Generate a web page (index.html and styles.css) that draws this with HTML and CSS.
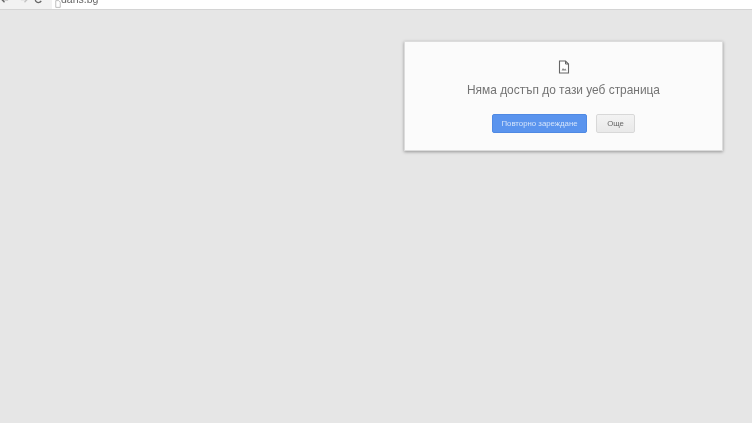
FILE: index.html
```html
<!DOCTYPE html>
<html lang="bg">
<head>
<meta charset="utf-8">
<title>dans.bg</title>
<link rel="stylesheet" href="styles.css">
</head>
<body>
<header class="toolbar">
  <div class="nav">
    <svg class="nav-icon" viewBox="0 0 10 10"><path d="M9 5H2M5 2 2 5l3 3" fill="none" stroke="#666" stroke-width="1.5"/></svg>
    <svg class="nav-icon nav-fwd" viewBox="0 0 10 10"><path d="M1 5h7M5 2l3 3-3 3" fill="none" stroke="#c4c4c4" stroke-width="1.5"/></svg>
    <svg class="nav-icon" viewBox="0 0 10 10"><path d="M8 6.5A3.5 3.5 0 1 1 7.5 2.5M8 1v2.5H5.5" fill="none" stroke="#666" stroke-width="1.4"/></svg>
  </div>
  <div class="address">
    <svg class="page-icon" viewBox="0 0 8 10"><path d="M1 .5h4l2 2v7H1z" fill="#fff" stroke="#aaa"/></svg>
    <span class="url">dans.bg</span>
  </div>
</header>
<main class="page">
  <section class="card">
    <svg class="error-icon" viewBox="0 0 12 14">
      <path d="M1.5 1h6l3 3v9h-9z" fill="#fff" stroke="#666" stroke-width="1.1"/>
      <path d="M7.5 1v3h3" fill="none" stroke="#666"/>
      <path d="M3.5 10.5 5 8l1.2 1.4L7.2 8.6l1.4 1.9z" fill="#888"/>
    </svg>
    <h1 class="title">Няма достъп до тази уеб страница</h1>
    <div class="actions">
      <button class="btn btn-primary">Повторно зареждане</button>
      <button class="btn btn-more">Още</button>
    </div>
  </section>
</main>
</body>
</html>
```
FILE: styles.css
```css
* { box-sizing: border-box; }
html, body { margin: 0; height: 100%; }
body {
  width: 752px;
  height: 423px;
  overflow: hidden;
  background: #e6e6e6;
  font-family: "Liberation Sans", Arial, sans-serif;
  display: flex;
  flex-direction: column;
}
.toolbar {
  height: 10px;
  flex: none;
  display: flex;
  align-items: flex-end;
  background: #f2f2f2;
  border-bottom: 1px solid #d4d4d4;
  overflow: hidden;
  filter: blur(0.4px);
}
.nav {
  display: flex;
  gap: 5px;
  width: 52px;
  flex: none;
  align-self: flex-start;
  margin-top: -5px;
}
.nav-icon { width: 9px; height: 9px; flex: none; }
.nav-fwd { margin-left: 6px; }
.address {
  width: 700px;
  height: 9px;
  background: #fff;
  display: flex;
  align-items: flex-end;
  padding-left: 3px;
}
.page-icon { width: 6px; height: 8px; flex: none; margin-bottom: 1px; }
.url {
  font-size: 10.5px;
  line-height: 11px;
  color: #666;
  margin-bottom: 4px;
  white-space: nowrap;
}
.page {
  flex: 1;
  display: flex;
  justify-content: flex-end;
  align-items: flex-start;
  padding: 31px 29px 0 0;
}
.card {
  width: 319px;
  height: 110px;
  background: #fbfbfb;
  border: 1px solid #dcdcdc;
  box-shadow: 0 1px 3px rgba(0, 0, 0, 0.35);
  display: flex;
  flex-direction: column;
  align-items: center;
  padding-top: 18px;
}
.error-icon {
  width: 12px;
  height: 14px;
  flex: none;
  filter: blur(0.5px);
}
.title {
  margin: 9px 0 0;
  font-size: 11.9px;
  font-weight: 400;
  line-height: 14px;
  color: #737373;
  white-space: nowrap;
  filter: blur(0.5px);
}
.actions {
  display: flex;
  gap: 9px;
  margin-top: 17px;
}
.btn {
  height: 19px;
  padding: 0;
  font-family: inherit;
  font-size: 7.8px;
  border-radius: 2px;
  filter: blur(0.5px);
}
.btn-primary {
  width: 95px;
  background: #5a94ee;
  border: 1px solid #4f89e3;
  color: #d5e4fa;
}
.btn-more {
  width: 39px;
  background: linear-gradient(#f3f3f3, #e9e9e9);
  border: 1px solid #d8d8d8;
  color: #666;
}
```
